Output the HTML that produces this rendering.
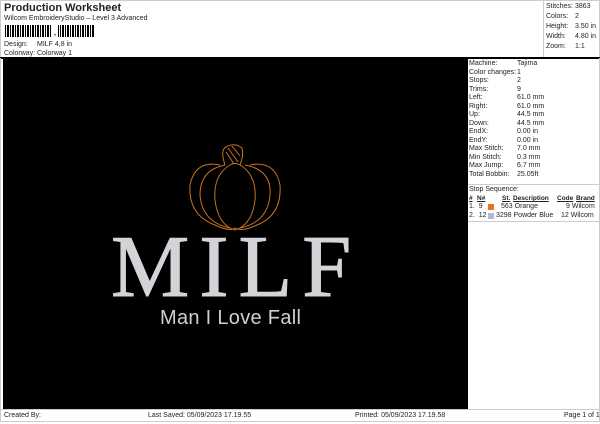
<!DOCTYPE html><html><head><style>
body{margin:0;width:600px;height:424px;background:#fff;font-family:"Liberation Sans",sans-serif;position:relative;overflow:hidden;color:#222}
.a{position:absolute;font-size:7px;white-space:nowrap}
.r td{font-size:7px;padding:0;line-height:8.5px;white-space:nowrap}
</style></head><body>
<div class="a" style="left:4px;top:2px;font-size:11px;font-weight:bold">Production Worksheet</div>
<div class="a" style="left:4px;top:15px">Wilcom EmbroideryStudio – Level 3 Advanced</div>
<div style="position:absolute;left:5px;top:25px;width:90px;height:12px;background:repeating-linear-gradient(90deg,#000 0 1px,#fff 1px 2px,#000 2px 4px,#fff 4px 5px)"></div>
<div style="position:absolute;left:52px;top:25px;width:6px;height:13px;background:#fff"></div>
<div class="a" style="left:54px;top:30px;font-weight:bold">,</div>
<div class="a" style="left:4px;top:41px">Design:</div><div class="a" style="left:37px;top:41px">MILF 4,8 in</div>
<div class="a" style="left:4px;top:50px">Colorway:</div><div class="a" style="left:37px;top:50px">Colorway 1</div>
<div style="position:absolute;left:0;top:0;width:598px;height:58px;border:1px solid #ccc;border-bottom:none"></div>
<div style="position:absolute;left:543px;top:0;width:1px;height:58px;background:#ccc"></div>
<table class="r" style="position:absolute;left:546px;top:2px;border-collapse:collapse">
<tr><td style="line-height:10px;width:29px">Stitches:</td><td style="line-height:10px">3863</td></tr>
<tr><td style="line-height:10px">Colors:</td><td style="line-height:10px">2</td></tr>
<tr><td style="line-height:10px">Height:</td><td style="line-height:10px">3.50 in</td></tr>
<tr><td style="line-height:10px">Width:</td><td style="line-height:10px">4.80 in</td></tr>
<tr><td style="line-height:10px">Zoom:</td><td style="line-height:10px">1:1</td></tr></table>
<div style="position:absolute;left:0;top:57px;width:600px;height:2px;background:#000"></div>
<div style="position:absolute;left:3px;top:58px;width:465px;height:351px;background:#000"></div>
<table class="r" style="position:absolute;left:469px;top:60px;border-collapse:collapse">
<tr><td style="width:48px">Machine:</td><td>Tajima</td></tr>
<tr><td>Color changes:</td><td>1</td></tr><tr><td>Stops:</td><td>2</td></tr><tr><td>Trims:</td><td>9</td></tr>
<tr><td>Left:</td><td>61.0 mm</td></tr><tr><td>Right:</td><td>61.0 mm</td></tr><tr><td>Up:</td><td>44.5 mm</td></tr><tr><td>Down:</td><td>44.5 mm</td></tr>
<tr><td>EndX:</td><td>0.00 in</td></tr><tr><td>EndY:</td><td>0.00 in</td></tr><tr><td>Max Stitch:</td><td>7.0 mm</td></tr><tr><td>Min Stitch:</td><td>0.3 mm</td></tr><tr><td>Max Jump:</td><td>6.7 mm</td></tr><tr><td>Total Bobbin:</td><td>25.05ft</td></tr></table>
<div style="position:absolute;left:468px;top:184px;width:132px;height:1px;background:#ccc"></div>
<div class="a" style="left:469px;top:186px">Stop Sequence:</div>
<div class="a" style="left:469px;top:195px;font-size:6.5px;font-weight:bold;text-decoration:underline">#</div>
<div class="a" style="left:477px;top:195px;font-size:6.5px;font-weight:bold;text-decoration:underline">N#</div>
<div class="a" style="left:502px;top:195px;font-size:6.5px;font-weight:bold;text-decoration:underline">St.</div>
<div class="a" style="left:513px;top:195px;font-size:6.5px;font-weight:bold;text-decoration:underline">Description</div>
<div class="a" style="left:557px;top:195px;font-size:6.5px;font-weight:bold;text-decoration:underline">Code</div>
<div class="a" style="left:576px;top:195px;font-size:6.5px;font-weight:bold;text-decoration:underline">Brand</div>
<div class="a" style="left:469px;top:203px">1.&nbsp; 9</div><div style="position:absolute;left:488px;top:204px;width:6px;height:6px;background:#e8731a"></div><div class="a" style="left:501px;top:203px">563 Orange</div><div class="a" style="left:566px;top:203px">9 Wilcom</div>
<div class="a" style="left:469px;top:212px">2.&nbsp; 12</div><div style="position:absolute;left:488px;top:213px;width:6px;height:6px;background:#b4b4dc"></div><div class="a" style="left:496px;top:212px">3298 Powder Blue</div><div class="a" style="left:561px;top:212px">12 Wilcom</div>
<div style="position:absolute;left:468px;top:221px;width:132px;height:1px;background:#ccc"></div>
<div style="position:absolute;left:0;top:58px;width:1px;height:364px;background:#ccc"></div>
<div style="position:absolute;left:599px;top:58px;width:1px;height:364px;background:#ccc"></div>
<svg style="position:absolute;left:180px;top:140px" width="110" height="95" viewBox="0 0 110 95" fill="none" stroke="#c8741e" stroke-width="1">
<path d="M45 25 Q40 10 46 7 Q55 2 62 8 Q64 15 60 25"/>
<path d="M48 8 L58 22 M52 6 L60 16 M46 12 L54 24"/>
<path d="M40 25 Q15 20 10 45 Q8 75 35 85 Q50 92 55 88 Q62 92 77 85 Q102 75 100 45 Q95 20 70 25"/>
<path d="M45 25 Q20 30 20 55 Q22 82 50 88"/><path d="M65 25 Q92 30 90 55 Q88 82 60 88"/>
<path d="M50 25 Q33 35 35 60 Q38 85 55 90 Q72 85 75 60 Q77 35 60 25 Q55 22 50 25"/>
</svg>
<div class="a" style="left:111px;top:224px;font-family:'Liberation Serif',serif;font-size:88px;color:#d4d4d8;letter-spacing:10px;line-height:88px;-webkit-text-stroke:1px #d4d4d8">MILF</div>
<div class="a" style="left:160px;top:307px;font-size:20px;color:#cfcfd4;letter-spacing:0.3px">Man I Love Fall</div>
<div style="position:absolute;left:0;top:409px;width:600px;height:1px;background:#ccc"></div>
<div style="position:absolute;left:0;top:421px;width:600px;height:1px;background:#ccc"></div>
<div class="a" style="left:4px;top:412px">Created By:</div>
<div class="a" style="left:148px;top:412px">Last Saved: 05/09/2023 17.19.55</div>
<div class="a" style="left:355px;top:412px">Printed: 05/09/2023 17.19.58</div>
<div class="a" style="left:564px;top:412px">Page 1 of 1</div>
</body></html>
